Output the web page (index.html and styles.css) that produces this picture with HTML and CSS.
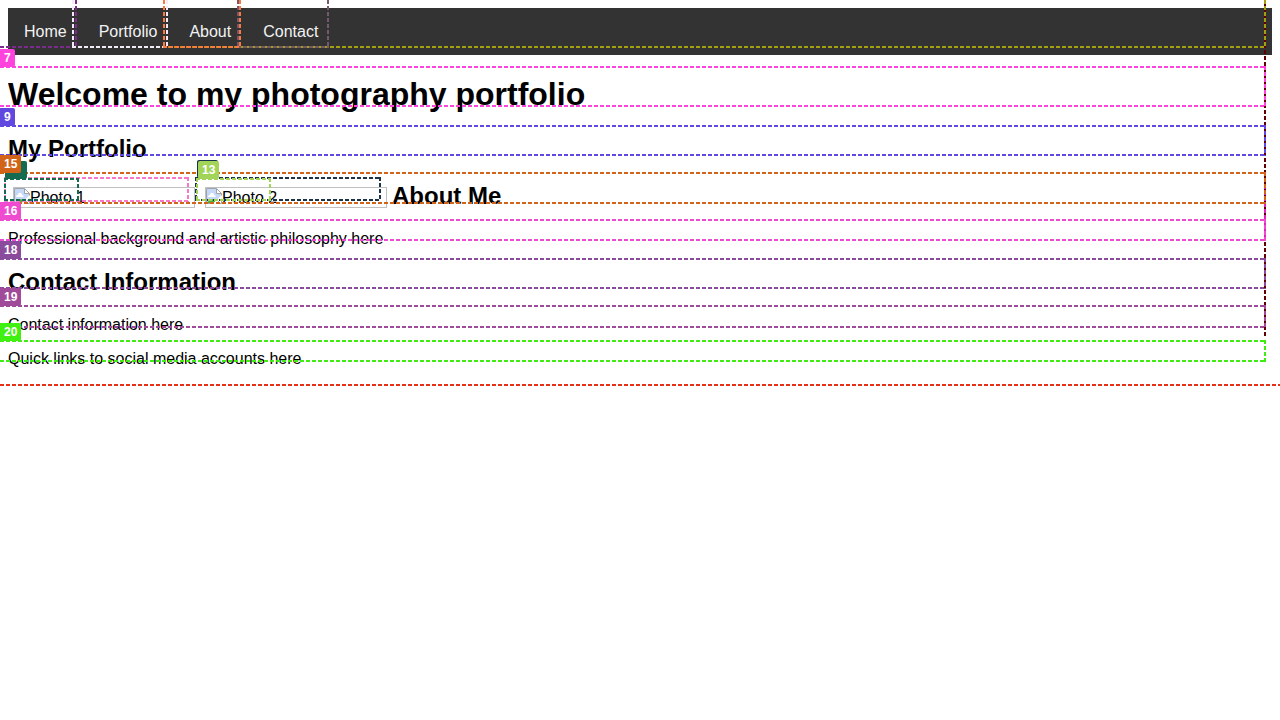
FILE: index.html
```html
<!DOCTYPE html>
<html lang="en">
<head>
<meta charset="utf-8">
<title>Photography Portfolio</title>
<link rel="stylesheet" href="styles.css">
</head>
<body>
<svg class="defs" width="0" height="0" aria-hidden="true">
  <symbol id="broken" viewBox="0 0 16 16">
    <path d="M.5.5h10l5 5v3l-4 3-3 4h-8z" fill="#c6d8f8"/>
    <path d="M2 9c0-2 2-2 2-2 0-3 4-3 4 0 2 0 2 2 1 2z" fill="#fff"/>
    <path d="M1 15c2-4 6-5 9-2l-2 2.500z" fill="#4fae38"/>
    <path d="M10.500.5v5h5z" fill="#fff"/>
    <path d="M15.500 8.500v-3l-5-5H.5v15h7M10.500.5v5h5M15.500 11v4.500H10z" fill="none" stroke="#a0a4a8"/>
    <path d="M16 8l-8 8" stroke="#fff" stroke-width="2"/>
  </symbol>
</svg>
<nav class="navbar">
  <a href="#home">Home</a>
  <a href="#portfolio">Portfolio</a>
  <a href="#about">About</a>
  <a href="#contact">Contact</a>
</nav>
<main>
  <h1 id="home">Welcome to my photography portfolio</h1>
  <h2 id="portfolio">My Portfolio</h2>
  <div class="about">
    <div class="photo"><svg class="icon" aria-hidden="true"><use href="#broken"/></svg>Photo 1</div>
    <div class="photo"><svg class="icon" aria-hidden="true"><use href="#broken"/></svg>Photo 2</div>
    <h2 id="about">About Me</h2>
  </div>
  <p class="philosophy">Professional background and artistic philosophy here</p>
  <h2 id="contact">Contact Information</h2>
  <p>Contact information here</p>
  <p>Quick links to social media accounts here</p>
</main>

<div class="marks">
  <div class="box page"></div>
  <div class="box wide maroon"></div>
  <div class="box wide olive"></div>
  <div class="box link home"></div>
  <div class="box link portfolio"></div>
  <div class="box link contact"></div>
  <div class="box link about-link"></div>
  <div class="box wide m7"></div>
  <div class="box wide m9"></div>
  <div class="box photo-a"></div>
  <div class="box alt-a"></div>
  <div class="box photo-b"></div>
  <div class="box alt-b"></div>
  <div class="box wide magenta"></div>
  <div class="box wide m15"></div>
  <div class="box wide m16"></div>
  <div class="box wide m18"></div>
  <div class="box wide m19"></div>
  <div class="box wide m20"></div>
  <span class="tag t7">7</span>
  <span class="tag t9">9</span>
  <span class="tag blank green"></span>
  <span class="tag blank navy"></span>
  <span class="tag t13">13</span>
  <span class="tag t15">15</span>
  <span class="tag t16">16</span>
  <span class="tag t18">18</span>
  <span class="tag t19">19</span>
  <span class="tag t20">20</span>
</div>
</body>
</html>
```
FILE: styles.css
```css
body {
  margin: 8px;
  font: 16px/18px "Liberation Sans", Arial, sans-serif;
  color: #000;
  background: #fff;
}
.defs { position: absolute; }
.navbar { display: flex; background: #333; }
.navbar a { padding: 15px 16px 14px; color: #f2f2f2; text-decoration: none; }
h1 { margin: 21px 0 22px; font-size: 32px; line-height: 37px; }
h2 { margin: 20px 0; font-size: 24px; line-height: 28px; }
p { margin: 16px 0; }
#portfolio { margin-bottom: 19px; }
.about { display: flex; }
.about h2 { margin: 0; }
.photo {
  display: flex;
  box-sizing: border-box;
  width: 182px;
  height: 21px;
  margin: 5px 5px 0;
  border: 1px solid #c0c0c0;
  line-height: 20px;
}
.icon { width: 16px; height: 16px; }
.philosophy { margin: 20px 0; }

/* Element outlines */
.marks { position: absolute; top: 0; left: 0; right: 0; }
.box {
  position: absolute;
  background:
    repeating-linear-gradient(90deg, var(--c) 0 4px, transparent 4px 6px) top / 100% 2px,
    repeating-linear-gradient(90deg, var(--c) 0 4px, transparent 4px 6px) bottom / 100% 2px,
    repeating-linear-gradient(var(--c) 0 4px, transparent 4px 6px) left / 2px 100%,
    repeating-linear-gradient(var(--c) 0 4px, transparent 4px 6px) right / 2px 100%;
  background-repeat: no-repeat;
}
.wide { left: -6px; right: 14px; }
.page { --c: #e83018; left: -6px; right: -6px; top: -6px; height: 392px; clip-path: inset(6px 6px 0); }
.maroon { --c: #600000; top: -10px; height: 350px; clip-path: inset(0 0 2px); }
.olive { --c: #a3a010; top: -12px; height: 60px; }
.link { top: -12px; height: 60px; }
.home { --c: #7b2c8b; left: -6px; width: 83px; }
.portfolio { --c: #f2ecf8; left: 72px; width: 96px; }
.about-link { --c: #ff7840; left: 163px; width: 78px; }
.contact { --c: #755870; left: 237px; width: 92px; }
.m7 { --c: #ff44dd; top: 66px; height: 41px; }
.m9 { --c: #6048e0; top: 125px; height: 31px; }
.m15 { --c: #d2641a; top: 172px; height: 32px; }
.m16 { --c: #ee4bd0; top: 219px; height: 22px; }
.m18 { --c: #8a4b9c; top: 258px; height: 31px; }
.m19 { --c: #a04a9a; top: 305px; height: 23px; }
.m20 { --c: #40ec14; top: 340px; height: 22px; }
.magenta { --c: #e020c0; top: 185px; height: 56px; clip-path: inset(2px 0); }
.photo-a { --c: #f878c8; left: 4px; top: 177px; width: 185px; height: 25px; }
.alt-a { --c: #146b50; left: 4px; top: 178px; width: 75px; height: 23px; }
.photo-b { --c: #1a3348; left: 195px; top: 177px; width: 186px; height: 24px; }
.alt-b { --c: #a2d45a; left: 196px; top: 178px; width: 75px; height: 23px; }

.tag {
  position: absolute;
  left: 0;
  padding: 2px 4px;
  border-radius: 0 2px 2px 0;
  color: #fff;
  font-size: 12px;
  font-weight: bold;
  line-height: 14px;
}
.blank { width: 14px; height: 14px; border-radius: 2px; }
.t7 { top: 49px; background: #ff44dd; }
.t9 { top: 108px; background: #6048e0; }
.green { top: 161px; left: 5px; background: #146b50; }
.navy { top: 160px; left: 197px; width: 13px; background: #1a3348; }
.t13 { top: 161px; left: 198px; border-radius: 2px; background: #a2d45a; }
.t15 { top: 155px; background: #d2641a; }
.t16 { top: 202px; background: #ee4bd0; }
.t18 { top: 241px; background: #8a4b9c; }
.t19 { top: 288px; background: #a04a9a; }
.t20 { top: 323px; background: #40f010; }
```
